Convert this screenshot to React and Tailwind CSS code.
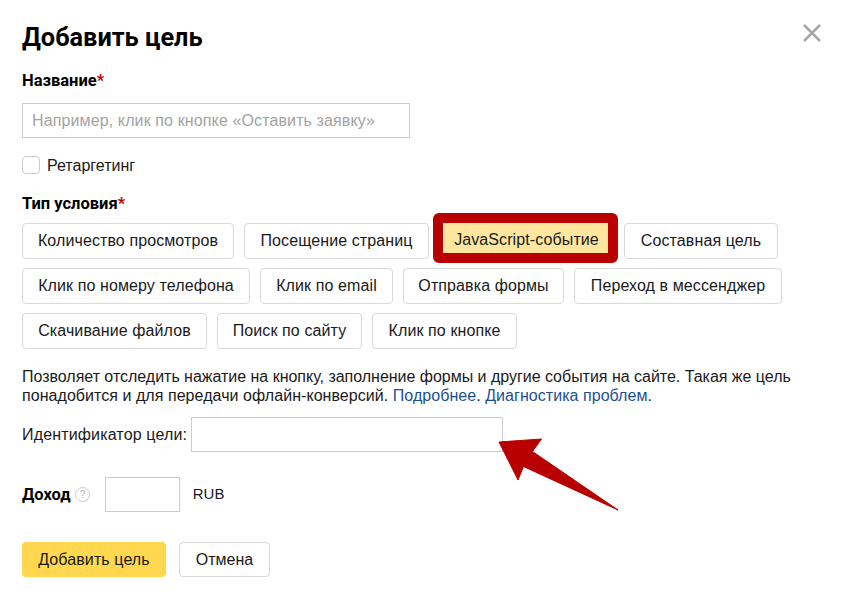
import React from "react";

const btn = "h-[36px] flex items-center justify-center bg-white border border-[#d9d9d9] rounded-[4px] text-[16px] tracking-[0.1px] text-[#1a1a1a] whitespace-nowrap";
const label = "font-['Roboto',sans-serif] font-bold text-[16.5px] leading-[20px] text-black";

function Chip({ w, children }) {
  return <div className={btn} style={{ width: w }}>{children}</div>;
}

export default function App() {
  return (
    <div className="relative w-[843px] h-[600px] overflow-hidden bg-white pl-[22px] font-['Liberation_Sans',sans-serif] text-[#1a1a1a]">
      <svg className="absolute left-[803px] top-[24px]" width="18" height="18" viewBox="0 0 18 18" fill="none" stroke="#a6a6a6" strokeWidth="2.5">
        <path d="M1 1 L17 17 M17 1 L1 17" />
      </svg>

      <h1 className="pt-[21px] font-['Roboto',sans-serif] font-bold text-[25.3px] leading-[34px] text-black">Добавить цель</h1>

      <div className={`mt-[16px] ${label}`}>Название<span className="text-[#c00000]">*</span></div>

      <div className="mt-[12px] w-[388px] h-[35px] border border-[#cccccc] flex items-center pl-[9px] text-[16px] tracking-[0.12px] text-[#a3a3a3]">
        Например, клик по кнопке «Оставить заявку»
      </div>

      <div className="mt-[18px] flex items-center h-[18px]">
        <div className="w-[18px] h-[18px] border border-[#cccccc] rounded-[4px]" />
        <span className="ml-[7px] pt-[2px] text-[16px]">Ретаргетинг</span>
      </div>

      <div className={`mt-[20px] ${label}`}>Тип условия<span className="text-[#c00000]">*</span></div>

      <div className="mt-[9px] flex flex-col gap-[9px]">
        <div className="flex gap-[10px]">
          <Chip w={212}>Количество просмотров</Chip>
          <Chip w={185}>Посещение страниц</Chip>
          <div className="relative w-[175px] h-[36px] flex items-start justify-center">
            <div className="w-[165px] h-[30px] pt-[3px] flex items-center justify-center bg-[#fee69f] text-[16px] tracking-[0.1px] whitespace-nowrap">JavaScript-событие</div>
            <div className="absolute left-[-6px] top-[-10px] w-[185px] h-[50px] border-[10px] border-[#b80000] rounded-[6px]" />
          </div>
          <Chip w={154}>Составная цель</Chip>
        </div>
        <div className="flex gap-[10px]">
          <Chip w={228}>Клик по номеру телефона</Chip>
          <Chip w={133}>Клик по email</Chip>
          <Chip w={161}>Отправка формы</Chip>
          <Chip w={208}>Переход в мессенджер</Chip>
        </div>
        <div className="flex gap-[10px]">
          <Chip w={185}>Скачивание файлов</Chip>
          <Chip w={145}>Поиск по сайту</Chip>
          <Chip w={145}>Клик по кнопке</Chip>
        </div>
      </div>

      <p className="mt-[18px] w-[810px] text-[16px] leading-[19px]">
        <span className="tracking-[-0.02px]">Позволяет отследить нажатие на кнопку, заполнение формы и другие события на сайте. Такая же цель</span>
        <br />
        <span className="tracking-[0.05px]">понадобится и для передачи офлайн-конверсий. <span className="text-[#1c4f91]">Подробнее</span>. <span className="text-[#1c4f91]">Диагностика проблем</span>.</span>
      </p>

      <div className="mt-[12px] flex items-center">
        <span className="text-[16px] tracking-[0.15px] w-[169px] whitespace-nowrap">Идентификатор цели:</span>
        <div className="w-[312px] h-[35px] border border-[#cccccc]" />
      </div>

      <div className="mt-[25px] flex items-center h-[35px]">
        <span className={label}>Доход</span>
        <svg className="ml-[4px]" width="15" height="15" viewBox="0 0 15 15" fill="none">
          <circle cx="7.5" cy="7.5" r="7" stroke="#cccccc" />
          <text x="7.5" y="11" textAnchor="middle" fontSize="10" fill="#b3b3b3" fontFamily="Liberation Sans">?</text>
        </svg>
        <div className="ml-[15px] w-[75px] h-[35px] border border-[#cccccc]" />
        <span className="ml-[13px] text-[15px]">RUB</span>
      </div>

      <div className="mt-[30px] flex gap-[13px]">
        <div className="w-[144px] h-[35px] flex items-center justify-center bg-[#ffd84f] rounded-[4px] text-[16px] tracking-[0.1px]">Добавить цель</div>
        <div className="w-[91px] h-[35px] flex items-center justify-center bg-white border border-[#d9d9d9] rounded-[4px] text-[16px]">Отмена</div>
      </div>

      <svg className="absolute left-0 top-0 pointer-events-none" width="843" height="600" viewBox="0 0 843 600">
        <path d="M499 442 L541.5 439 L532.5 451.5 L618 510 L523.5 466.5 L518 480 Z" fill="#b80000" stroke="#b80000" strokeWidth="1" strokeLinejoin="round" />
      </svg>
    </div>
  );
}
